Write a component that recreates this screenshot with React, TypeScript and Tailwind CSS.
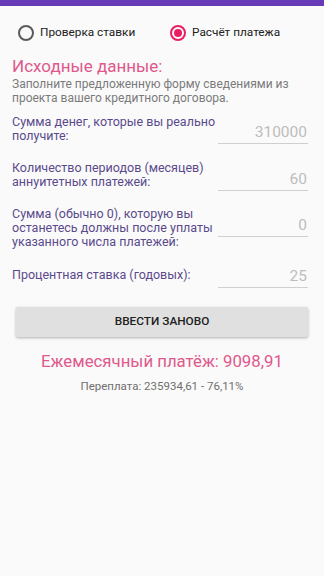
import React from "react";

const Row = ({
  lines,
  value,
  rowMt,
  labelMt,
  inputMt,
}: {
  lines: string[];
  value: string;
  rowMt: string;
  labelMt: string;
  inputMt: string;
}) => (
  <div className={`flex items-start ${rowMt}`}>
    <div className={`flex-1 text-[12.5px] leading-[14px] text-[#5a4a8c] whitespace-nowrap ${labelMt}`}>
      {lines.map((l, i) => (
        <div key={i}>{l}</div>
      ))}
    </div>
    <div
      className={`w-[90px] shrink-0 border-b border-[#cfcfcf] text-right text-[15.5px] leading-[18px] text-[#bdbdbd] pb-[2px] pr-[1px] ${inputMt}`}
    >
      {value}
    </div>
  </div>
);

export default function App() {
  return (
    <div
      className="w-[324px] h-[576px] bg-[#fafafa] flex flex-col"
      style={{ fontFamily: "Roboto, 'Noto Sans', sans-serif" }}
    >
      <div className="h-[6px] bg-[#673ab7]" />
      <div className="px-[12px]">
        <div className="flex items-center h-[28px] mt-[13px]">
          <div className="flex items-center w-[158px] pl-[6px]">
            <div className="w-[16px] h-[16px] rounded-full border-2 border-[#5a5a5a]" />
            <span className="ml-[6px] text-[11.8px] text-[#212121]">Проверка ставки</span>
          </div>
          <div className="flex items-center">
            <div className="w-[16px] h-[16px] rounded-full border-2 border-[#e91e63] flex items-center justify-center">
              <div className="w-[8px] h-[8px] rounded-full bg-[#e91e63]" />
            </div>
            <span className="ml-[6px] text-[11.8px] text-[#212121]">Расчёт платежа</span>
          </div>
        </div>
        <div className="mt-[8px] text-[17px] leading-[22px] text-[#e0588c]">Исходные данные:</div>
        <div className="text-[12px] leading-[14px] text-[#7a7a7a]">
          Заполните предложенную форму сведениями из
          <br />
          проекта вашего кредитного договора.
        </div>
        <div className="pr-[4px]">
          <Row
            rowMt="mt-[10px]"
            labelMt="mt-0"
            inputMt="mt-[8px]"
            lines={["Сумма денег, которые вы реально", "получите:"]}
            value="310000"
          />
          <Row
            rowMt="mt-[17px]"
            labelMt="mt-0"
            inputMt="mt-[9px]"
            lines={["Количество периодов (месяцев)", "аннуитетных платежей:"]}
            value="60"
          />
          <Row
            rowMt="mt-[16px]"
            labelMt="mt-0"
            inputMt="mt-[9px]"
            lines={["Сумма (обычно 0), которую вы", "останетесь должны после уплаты", "указанного числа платежей:"]}
            value="0"
          />
          <Row
            rowMt="mt-[16px]"
            labelMt="mt-[3px]"
            inputMt="mt-[2px]"
            lines={["Процентная ставка (годовых):"]}
            value="25"
          />
        </div>
        <div className="mx-[4px] mt-[19px] h-[30px] bg-[#e0e0e0] rounded-[2px] shadow-[0_1px_3px_rgba(0,0,0,0.3)] flex items-center justify-center text-[11.8px] font-medium text-[#212121]">
          ВВЕСТИ ЗАНОВО
        </div>
        <div className="mt-[13px] text-center text-[16.8px] text-[#e0588c] leading-[22px]">
          Ежемесячный платёж: 9098,91
        </div>
        <div className="mt-[6px] text-center text-[11.5px] leading-[16px] text-[#6f6f6f]">
          Переплата: 235934,61 - 76,11%
        </div>
      </div>
    </div>
  );
}
